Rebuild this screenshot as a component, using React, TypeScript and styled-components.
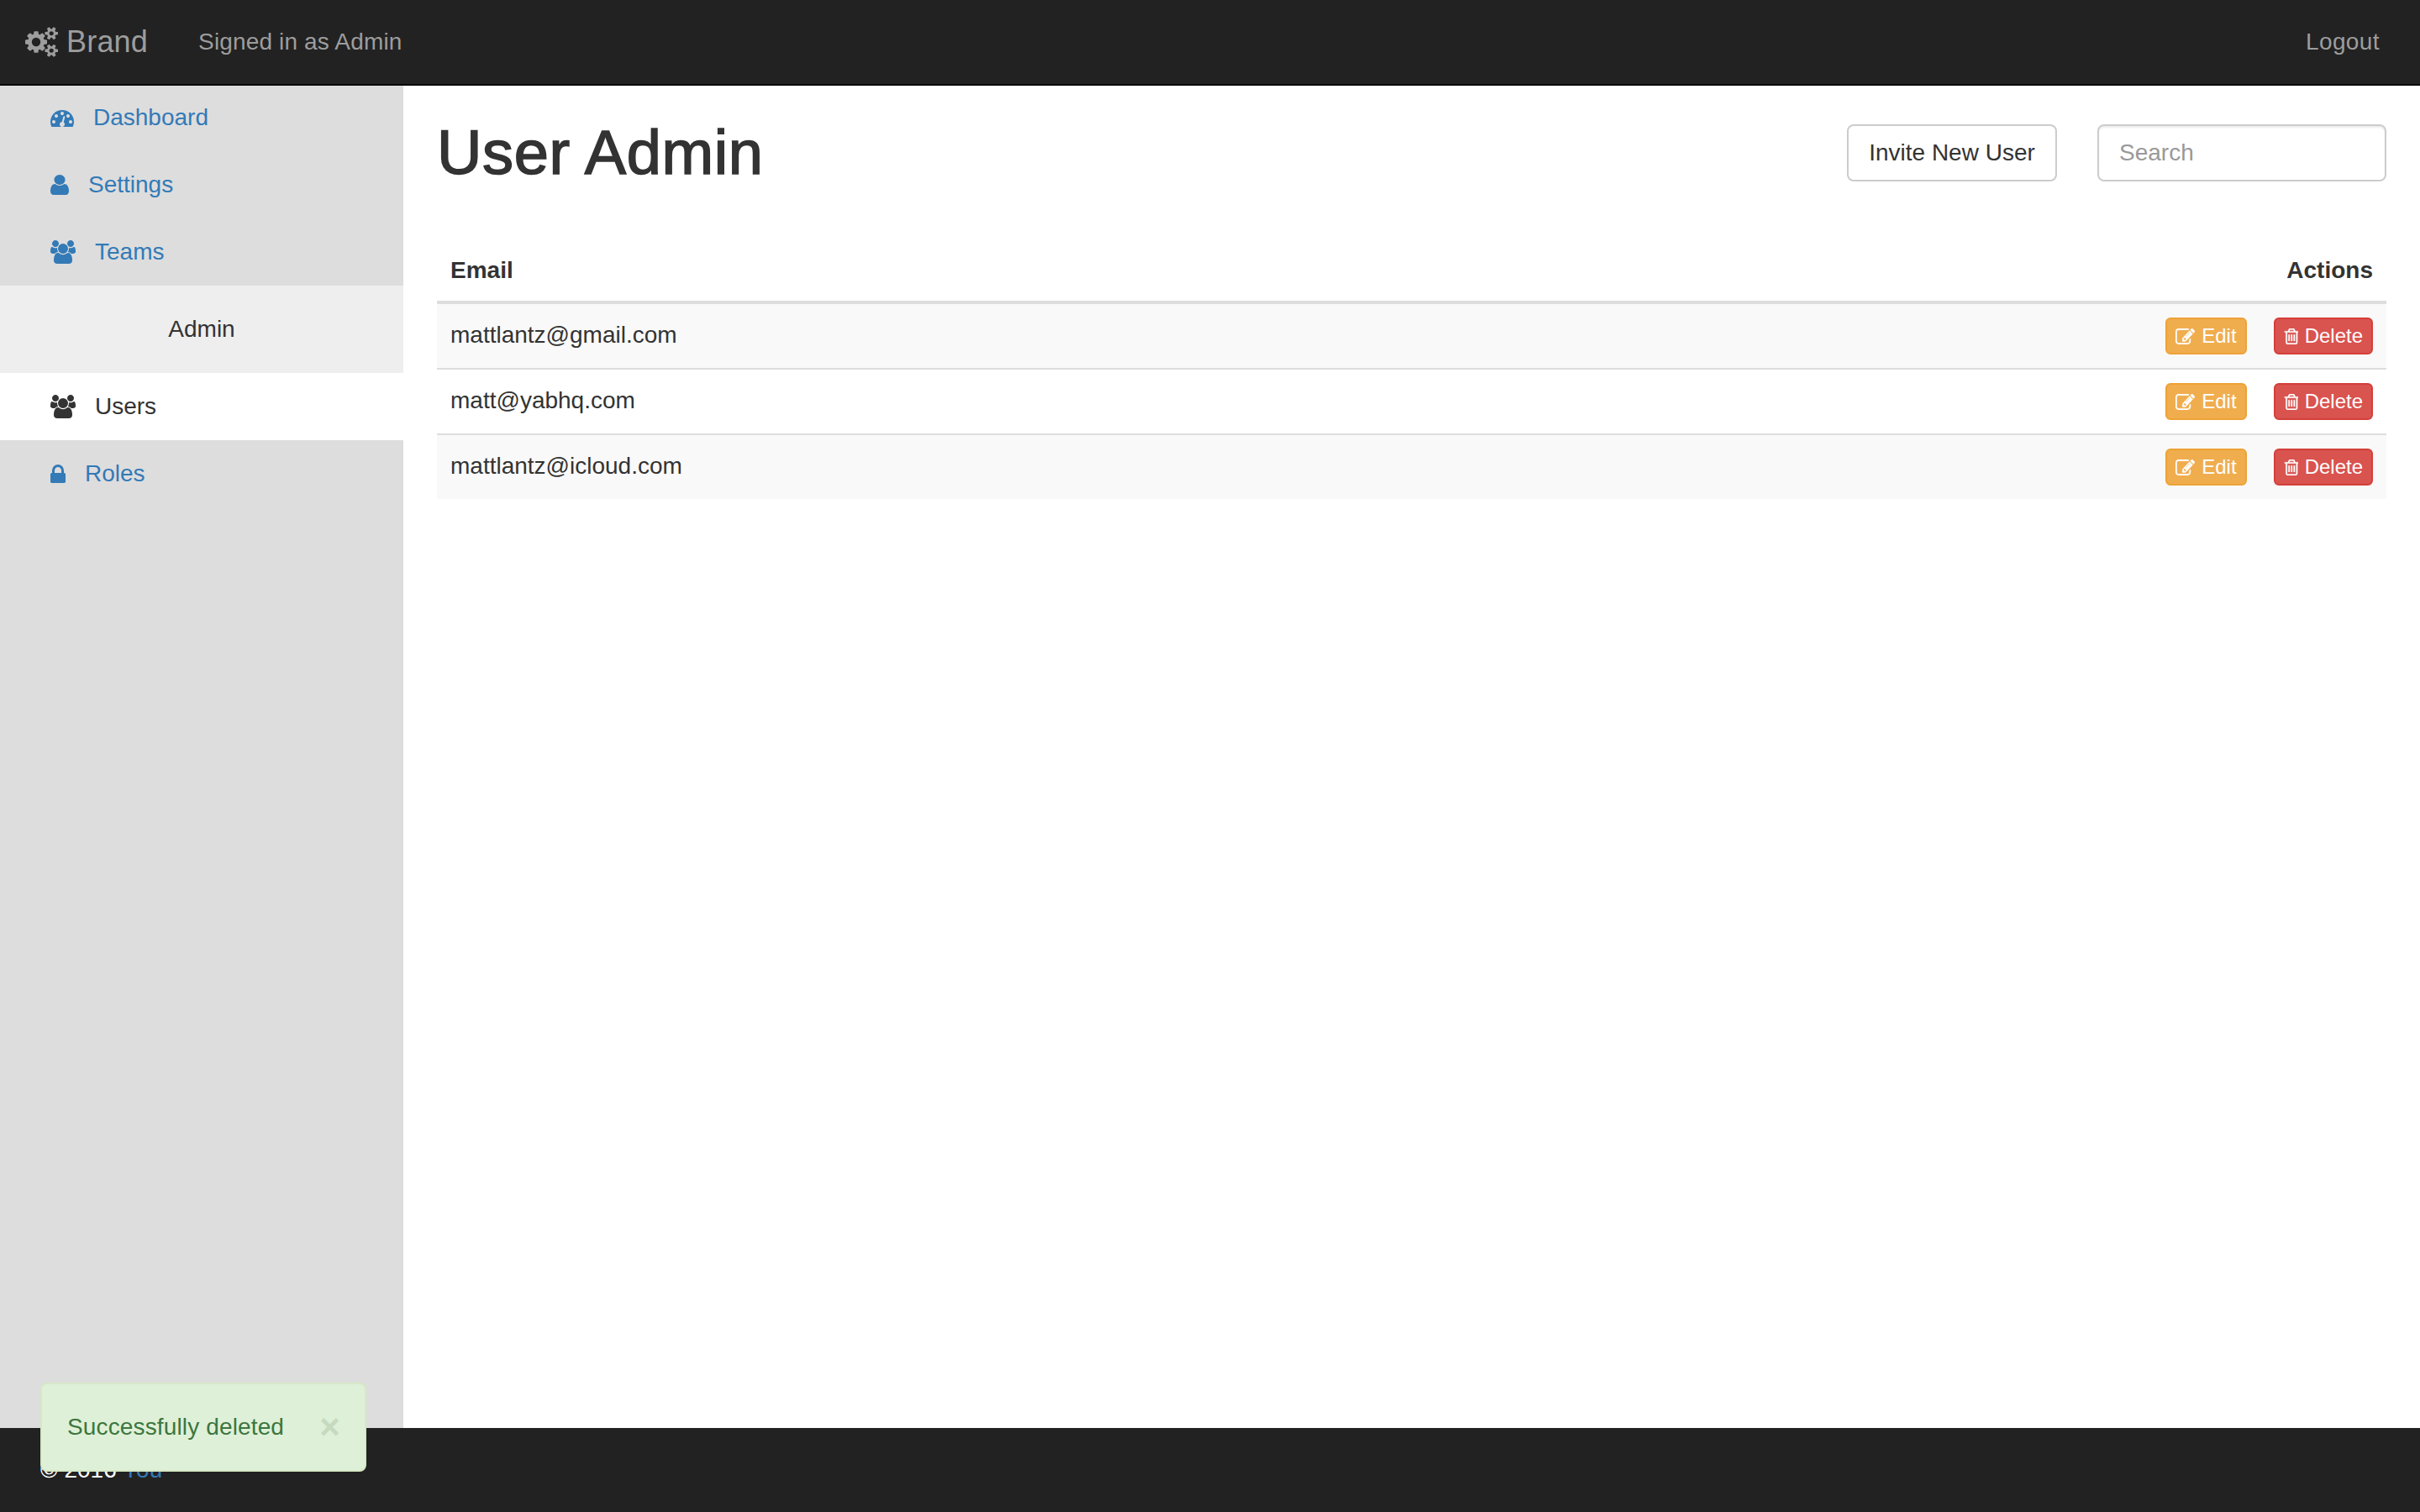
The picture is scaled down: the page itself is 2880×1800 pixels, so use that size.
import React from "react";
import styled, { createGlobalStyle } from "styled-components";

const Global = createGlobalStyle`
  html, body { margin: 0; padding: 0; height: 100%; }
  body { font-family: "Liberation Sans", Arial, sans-serif; font-size: 28px; line-height: 40px; color: #333; background: #fff; }
  * { box-sizing: border-box; }
`;

const paths = {
  cogs: "M896 896q0-106-75-181t-181-75-181 75-75 181 75 181 181 75 181-75 75-181zm768 512q0-52-38-90t-90-38-90 38-38 90q0 53 37.5 90.5t90.5 37.5 90.5-37.5 37.5-90.5zm0-1024q0-52-38-90t-90-38-90 38-38 90q0 53 37.5 90.5t90.5 37.5 90.5-37.5 37.5-90.5zm-384 421v185q0 10-7 19.5t-16 10.5l-155 24q-11 35-32 76 34 48 90 115 7 11 7 20 0 12-7 19-23 30-82.5 89.5t-78.5 59.5q-11 0-21-7l-115-90q-37 19-77 31-11 108-23 155-7 24-30 24h-186q-11 0-20-7.5t-10-17.5l-23-153q-34-10-75-31l-118 89q-7 7-20 7-11 0-21-8-144-133-144-160 0-9 7-19 10-14 41-53t47-61q-23-44-35-82l-152-24q-10-1-17-9.5t-7-19.5v-185q0-10 7-19.5t16-10.5l155-24q11-35 32-76-34-48-90-115-7-11-7-20 0-12 7-20 22-30 82-89t79-59q11 0 21 7l115 90q34-18 77-32 11-108 23-154 7-24 30-24h186q11 0 20 7.5t10 17.5l23 153q34 10 75 31l118-89q8-7 20-7 11 0 21 8 144 133 144 160 0 8-7 19-12 16-42 54t-45 60q23 48 34 82l152 23q10 2 17 10.5t7 19.5zm640 533v140q0 16-149 31-12 27-30 52 51 113 51 138 0 4-4 7-122 71-124 71-8 0-46-47t-52-68q-20 2-30 2t-30-2q-14 21-52 68t-46 47q-2 0-124-71-4-3-4-7 0-25 51-138-18-25-30-52-149-15-149-31v-140q0-16 149-31 13-29 30-52-51-113-51-138 0-4 4-7 4-2 35-20t59-34 30-16q8 0 46 46.5t52 67.5q20-2 30-2t30 2q51-71 92-112l6-2q4 0 124 70 4 3 4 7 0 25-51 138 17 23 30 52 149 15 149 31zm0-1024v140q0 16-149 31-12 27-30 52 51 113 51 138 0 4-4 7-122 71-124 71-8 0-46-47t-52-68q-20 2-30 2t-30-2q-14 21-52 68t-46 47q-2 0-124-71-4-3-4-7 0-25 51-138-18-25-30-52-149-15-149-31v-140q0-16 149-31 13-29 30-52-51-113-51-138 0-4 4-7 4-2 35-20t59-34 30-16q8 0 46 46.5t52 67.5q20-2 30-2t30 2q51-71 92-112l6-2q4 0 124 70 4 3 4 7 0 25-51 138 17 23 30 52 149 15 149 31z",
  dashboard: "M384 1184q0-53-37.5-90.5t-90.5-37.5-90.5 37.5-37.5 90.5 37.5 90.5 90.5 37.5 90.5-37.5 37.5-90.5zm192-448q0-53-37.5-90.5t-90.5-37.5-90.5 37.5-37.5 90.5 37.5 90.5 90.5 37.5 90.5-37.5 37.5-90.5zm428 481l101-382q6-26-7.5-48.5t-38.5-29.5-48 6.5-30 39.5l-101 382q-60 5-107 43.5t-63 98.5q-20 77 20 146t117 89 146-20 89-117q16-60-6-117t-72-91zm660-33q0-53-37.5-90.5t-90.5-37.5-90.5 37.5-37.5 90.5 37.5 90.5 90.5 37.5 90.5-37.5 37.5-90.5zm-640-640q0-53-37.5-90.5t-90.5-37.5-90.5 37.5-37.5 90.5 37.5 90.5 90.5 37.5 90.5-37.5 37.5-90.5zm448 192q0-53-37.5-90.5t-90.5-37.5-90.5 37.5-37.5 90.5 37.5 90.5 90.5 37.5 90.5-37.5 37.5-90.5zm320 448q0 261-141 483-19 29-54 29h-1402q-35 0-54-29-141-221-141-483 0-182 71-348t191-286 286-191 348-71 348 71 286 191 191 286 71 348z",
  user: "M1536 1399q0 109-62.5 187t-150.5 78h-854q-88 0-150.5-78t-62.5-187q0-85 8.5-160.5t31.5-152 58.5-131 94-89 134.5-34.5q131 128 313 128t313-128q76 0 134.5 34.5t94 89 58.5 131 31.5 152 8.5 160.5zm-256-887q0 159-112.5 271.5t-271.5 112.5-271.5-112.5-112.5-271.5 112.5-271.5 271.5-112.5 271.5 112.5 112.5 271.5z",
  users: "M593 896q-162 5-265 128h-134q-82 0-138-40.5t-56-118.5q0-353 124-353 6 0 43.5 21t97.5 42.5 119 21.5q67 0 133-23-5 37-5 66 0 139 81 256zm1071 637q0 120-73 189.5t-194 69.5h-874q-121 0-194-69.5t-73-189.5q0-53 3.5-103.5t14-109 26.5-108.5 43-97.5 62-81 85.5-53.5 111.5-20q10 0 43 21.5t73 48 107 48 135 21.5 135-21.5 107-48 73-48 43-21.5q61 0 111.5 20t85.5 53.5 62 81 43 97.5 26.5 108.5 14 109 3.5 103.5zm-1024-1277q0 106-75 181t-181 75-181-75-75-181 75-181 181-75 181 75 75 181zm704 384q0 159-112.5 271.5t-271.5 112.5-271.5-112.5-112.5-271.5 112.5-271.5 271.5-112.5 271.5 112.5 112.5 271.5zm576 225q0 78-56 118.5t-138 40.5h-134q-103-123-265-128 81-117 81-256 0-29-5-66 66 23 133 23 59 0 119-21.5t97.5-42.5 43.5-21q124 0 124 353zm-128-609q0 106-75 181t-181 75-181-75-75-181 75-181 181-75 181 75 75 181z",
  lock: "M640 768h512v-192q0-106-75-181t-181-75-181 75-75 181v192zm832 96v576q0 40-28 68t-68 28h-960q-40 0-68-28t-28-68v-576q0-40 28-68t68-28h32v-192q0-184 132-316t316-132 316 132 132 316v192h32q40 0 68 28t28 68z",
  edit: "M888 1184l116-116-152-152-116 116v56h96v96h56zm440-720q-16-16-33 1l-350 350q-17 17-1 33t33-1l350-350q17-17 1-33zm80 594v190q0 119-84.5 203.5t-203.5 84.5h-832q-119 0-203.5-84.5t-84.5-203.5v-832q0-119 84.5-203.5t203.5-84.5h832q63 0 117 25 15 7 18 23 3 17-9 29l-49 49q-14 14-32 8-23-6-45-6h-832q-66 0-113 47t-47 113v832q0 66 47 113t113 47h832q66 0 113-47t47-113v-126q0-13 9-22l64-64q15-15 35-7t20 29zm-96-738l288 288-672 672h-288v-288zm444 132l-92 92-288-288 92-92q28-28 68-28t68 28l152 152q28 28 28 68t-28 68z",
  trash: "M704 736v576q0 14-9 23t-23 9h-64q-14 0-23-9t-9-23v-576q0-14 9-23t23-9h64q14 0 23 9t9 23zm256 0v576q0 14-9 23t-23 9h-64q-14 0-23-9t-9-23v-576q0-14 9-23t23-9h64q14 0 23 9t9 23zm256 0v576q0 14-9 23t-23 9h-64q-14 0-23-9t-9-23v-576q0-14 9-23t23-9h64q14 0 23 9t9 23zm128 724v-948h-896v948q0 22 7 40.5t14.5 27 10.5 8.5h832q3 0 10.5-8.5t14.5-27 7-40.5zm-672-1076h448l-48-117q-7-9-17-11h-317q-10 2-17 11zm928 32v64q0 14-9 23t-23 9h-96v948q0 83-47 143.5t-113 60.5h-832q-66 0-113-57.5t-47-140.5v-954h-96q-14 0-23-9t-9-23v-64q0-14 9-23t23-9h309l70-167q15-37 54-63t79-26h320q40 0 79 26t54 63l70 167h309q14 0 23 9t9 23z",
};

type IconName = keyof typeof paths;
const boxes: Record<IconName, [string, number, number]> = {
  cogs: ["0 0 1920 1792", 39, 36],
  dashboard: ["0 160 1792 1408", 28, 22],
  user: ["256 128 1280 1536", 22, 24],
  users: ["0 0 1920 1792", 30, 28],
  lock: ["320 128 1152 1408", 18, 22],
  edit: ["0 128 1792 1408", 23, 19],
  trash: ["128 128 1408 1536", 17, 19],
};

const Svg = styled.svg`
  flex: none;
  display: block;
  fill: currentColor;
`;

const Icon = ({ name }: { name: IconName }) => {
  const [viewBox, w, h] = boxes[name];
  return (
    <Svg viewBox={viewBox} width={w} height={h} preserveAspectRatio="none" aria-hidden="true">
      <path d={paths[name]} />
    </Svg>
  );
};

const Page = styled.div`
  position: relative;
  display: flex;
  flex-direction: column;
  height: 1800px;
`;

const Navbar = styled.header`
  flex: none;
  display: flex;
  align-items: center;
  height: 102px;
  padding: 0 48px 0 30px;
  background: #222;
  border-bottom: 2px solid #080808;
  color: #9d9d9d;
`;

const Brand = styled.a`
  display: flex;
  align-items: center;
  gap: 10px;
  font-size: 36px;
  letter-spacing: 0.2px;
  margin-right: 60px;
`;

const NavText = styled.span`
  font-size: 28px;
  letter-spacing: 0.15px;
`;

const Logout = styled.a`
  margin-left: auto;
  letter-spacing: 0.4px;
`;

const Body = styled.div`
  flex: 1;
  display: flex;
  min-height: 0;
`;

const Sidebar = styled.nav`
  flex: none;
  width: 480px;
  background: #ddd;
`;

const NavRow = styled.a<{ $active?: boolean; $first?: boolean }>`
  display: flex;
  align-items: center;
  gap: 23px;
  height: ${(p) => (p.$first ? 78 : 80)}px;
  padding: ${(p) => (p.$first ? "0 0 2px 60px" : "0 0 0 60px")};
  color: ${(p) => (p.$active ? "#333" : "#337ab7")};
  background: ${(p) => (p.$active ? "#fff" : "transparent")};
`;

const NavHeading = styled.div`
  height: 104px;
  display: flex;
  align-items: center;
  justify-content: center;
  background: #eee;
  color: #333;
`;

const Main = styled.main`
  flex: 1;
  min-width: 0;
  padding: 46px 40px 0;
`;

const TitleRow = styled.div`
  display: flex;
  align-items: center;
  height: 68px;
  margin-bottom: 70px;
`;

const Title = styled.h1`
  margin: 0;
  font-size: 74px;
  line-height: 68px;
  font-weight: 400;
  letter-spacing: 0.6px;
  -webkit-text-stroke: 1.6px #333;
  color: #333;
`;

const InviteButton = styled.button`
  margin-left: auto;
  height: 68px;
  width: 250px;
  padding: 0;
  background: #fff;
  border: 2px solid #ccc;
  border-radius: 8px;
  color: #333;
  font: inherit;
`;

const Search = styled.input`
  margin-left: 48px;
  width: 344px;
  height: 68px;
  padding: 0 24px;
  border: 2px solid #ccc;
  border-radius: 8px;
  box-shadow: inset 0 2px 2px rgba(0, 0, 0, 0.075);
  font: inherit;
  color: #555;
  &::placeholder { color: #999; opacity: 1; }
`;

const Table = styled.table`
  width: 100%;
  border-collapse: separate;
  border-spacing: 0;
`;

const Th = styled.th<{ $right?: boolean }>`
  height: 76px;
  padding: 16px;
  text-align: ${(p) => (p.$right ? "right" : "left")};
  font-weight: 700;
  border-bottom: 4px solid #ddd;
`;

const Tr = styled.tr<{ $striped?: boolean }>`
  background: ${(p) => (p.$striped ? "#f9f9f9" : "#fff")};
  &:not(:first-child) > td {
    height: 78px;
    border-top: 2px solid #ddd;
  }
`;

const Td = styled.td`
  height: 76px;
  padding: 0 16px;
  color: #333;
`;

const EmailCell = styled(Td)`
  padding-bottom: 2px;
`;

const Actions = styled.div`
  display: flex;
  justify-content: flex-end;
  gap: 32px;
`;

const ActionButton = styled.button<{ $kind: "edit" | "delete" }>`
  display: flex;
  align-items: center;
  gap: 8px;
  height: 44px;
  padding: 0 10px;
  border: 2px solid ${(p) => (p.$kind === "edit" ? "#eea236" : "#d43f3a")};
  border-radius: 6px;
  background: ${(p) => (p.$kind === "edit" ? "#f0ad4e" : "#d9534f")};
  color: #fff;
  font: 24px "Liberation Sans", Arial, sans-serif;
  svg {
    stroke: currentColor;
    stroke-width: 24px;
  }
`;

const Footer = styled.footer`
  flex: none;
  height: 100px;
  padding: 30px 48px;
  background: #222;
  color: #fff;
  a { color: #337ab7; }
`;

const Alert = styled.div`
  position: absolute;
  left: 48px;
  bottom: 48px;
  width: 388px;
  height: 106px;
  display: flex;
  align-items: center;
  justify-content: space-between;
  padding: 0 29px 0 30px;
  background: #dff0d8;
  border: 2px solid #d6e9c6;
  border-radius: 8px;
  color: #3c763d;
  letter-spacing: 0.14px;
`;

const Close = styled.span`
  font-size: 42px;
  font-weight: 700;
  color: #c5dabf;
  line-height: 1;
`;

const users = ["mattlantz@gmail.com", "matt@yabhq.com", "mattlantz@icloud.com"];

export default function App() {
  return (
    <Page>
      <Global />
      <Navbar>
        <Brand><Icon name="cogs" />Brand</Brand>
        <NavText>Signed in as Admin</NavText>
        <Logout>Logout</Logout>
      </Navbar>
      <Body>
        <Sidebar>
          <NavRow $first><Icon name="dashboard" />Dashboard</NavRow>
          <NavRow><Icon name="user" />Settings</NavRow>
          <NavRow><Icon name="users" />Teams</NavRow>
          <NavHeading>Admin</NavHeading>
          <NavRow $active><Icon name="users" />Users</NavRow>
          <NavRow><Icon name="lock" />Roles</NavRow>
        </Sidebar>
        <Main>
          <TitleRow>
            <Title>User Admin</Title>
            <InviteButton>Invite New User</InviteButton>
            <Search placeholder="Search" />
          </TitleRow>
          <Table>
            <thead>
              <tr>
                <Th>Email</Th>
                <Th $right>Actions</Th>
              </tr>
            </thead>
            <tbody>
              {users.map((email, i) => (
                <Tr key={email} $striped={i % 2 === 0}>
                  <EmailCell>{email}</EmailCell>
                  <Td>
                    <Actions>
                      <ActionButton $kind="edit"><Icon name="edit" />Edit</ActionButton>
                      <ActionButton $kind="delete"><Icon name="trash" />Delete</ActionButton>
                    </Actions>
                  </Td>
                </Tr>
              ))}
            </tbody>
          </Table>
        </Main>
      </Body>
      <Footer>© 2016 <a>You</a></Footer>
      <Alert>
        <span>Successfully deleted</span>
        <Close>×</Close>
      </Alert>
    </Page>
  );
}
